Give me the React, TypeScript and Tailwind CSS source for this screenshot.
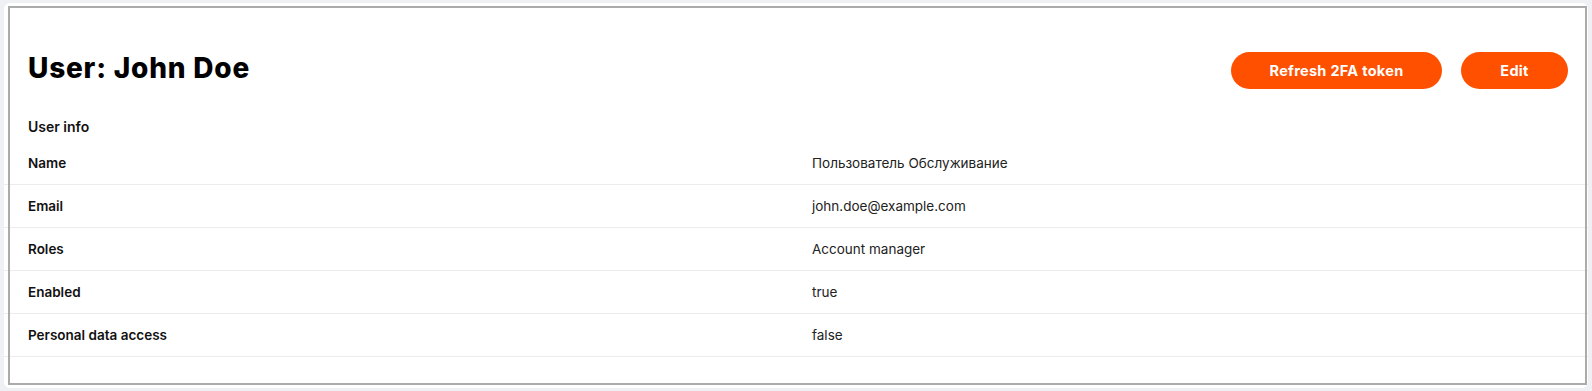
import React from "react";

type Row = {
  label: string,
  value: string
};

const rows: Row[] = [
  { label: "Name", value: "Пользователь Обслуживание" },
  { label: "Email", value: "john.doe@example.com" },
  { label: "Roles", value: "Account manager" },
  { label: "Enabled", value: "true" },
  { label: "Personal data access", value: "false" },
];

export default function App() {
  return (
    <div className="min-h-screen bg-[#eef0f3] px-1 pt-[3px] font-['Inter',sans-serif] text-[#111]">
      <div className="relative bg-white rounded-md pt-[49px] pb-[31px]">
        {/* grey frame drawn over the card */}
        <div className="pointer-events-none absolute left-1 right-px top-[3px] bottom-[3px] border-2 border-[#ababab]" />

        <div className="flex items-center justify-between pl-6 pr-[20px]">
          <h1 className="mb-[5px] text-[28px] font-extrabold leading-none tracking-[0.8px] text-black">User: John Doe</h1>
          <div className="flex gap-[19px]">
            <button className="h-[37px] w-[211px] rounded-full bg-[#ff5000] text-[14.5px] font-bold tracking-[0.3px] text-white">
              Refresh 2FA token
            </button>
            <button className="h-[37px] w-[107px] rounded-full bg-[#ff5000] text-[14.5px] font-bold tracking-[0.3px] text-white">
              Edit
            </button>
          </div>
        </div>

        <div className="mt-[29px] pl-6 text-[14px] font-semibold leading-[18px]">User info</div>

        <div className="mt-[6px]">
          {rows.map((row, i) => (
            <div className="flex h-[43px] items-center border-b border-[#ececec] text-[13.5px]" key={i}>
              <div className="w-[792px] pl-6 font-semibold">{row.label}</div>
              <div className="pl-4 text-[#222]">{row.value}</div>
            </div>
          ))}
        </div>
      </div>
    </div>
  );
}
